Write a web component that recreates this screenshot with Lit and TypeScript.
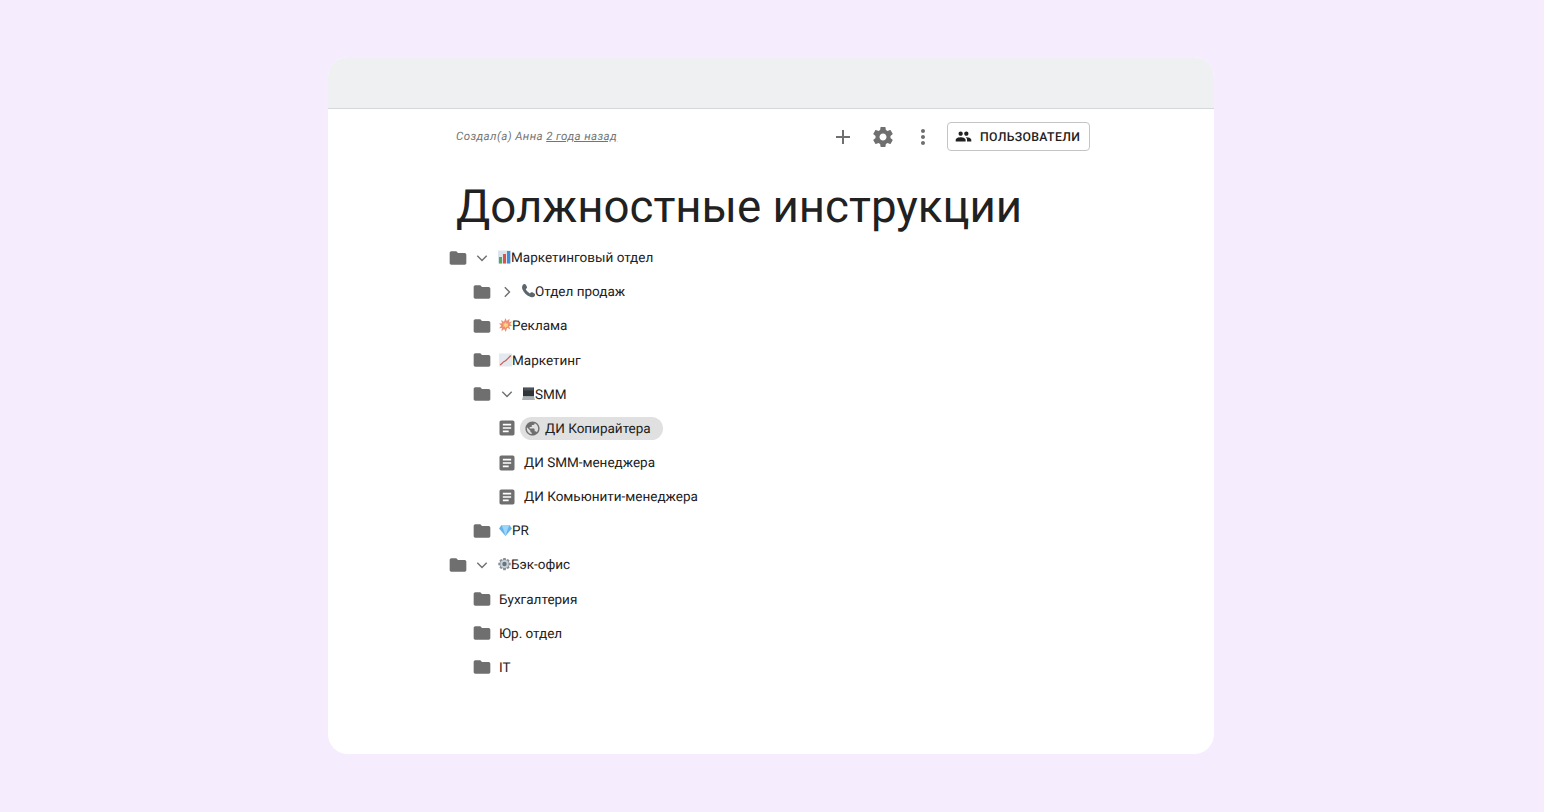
import { LitElement, html, css, svg } from "lit";
import { customElement } from "lit/decorators.js";

const folder = html`<svg class="ico" viewBox="0 0 24 24"><path d="M10 4H4c-1.100 0-1.990.900-1.990 2L2 18c0 1.100.900 2 2 2h16c1.100 0 2-.900 2-2V8c0-1.100-.900-2-2-2h-8l-2-2z"/></svg>`;
const doc = html`<svg class="ico" viewBox="0 0 24 24"><path d="M19 3H5c-1.100 0-2 .900-2 2v14c0 1.100.900 2 2 2h14c1.100 0 2-.900 2-2V5c0-1.100-.900-2-2-2zm-5 14H7v-2h7v2zm3-4H7v-2h10v2zm0-4H7V7h10v2z"/></svg>`;
const down = html`<svg class="chev" viewBox="0 0 16 16"><path d="M3.300 5.800l4.700 4.700 4.700-4.700" /></svg>`;
const right = html`<svg class="chev" viewBox="0 0 16 16"><path d="M5.800 3.300l4.700 4.700-4.700 4.700" /></svg>`;

const emoji: Record<string, unknown> = {
  chart: svg`<rect y="0.500" width="13" height="13" fill="#dbe4ec"/><rect x="1" y="7" width="3" height="6.500" fill="#55a84f"/><rect x="5" y="4" width="3" height="9.500" fill="#d9534a"/><rect x="9" y="1" width="3.200" height="12.500" fill="#3f8fd8"/>`,
  phone: svg`<path d="M.9.700c1-1 2.500-.8 3.100.2l1 2c.2.600 0 1.100-.5 1.500l-.8.700c.9 2 2.400 3.500 4.300 4.400l.8-.9c.4-.5 1-.6 1.600-.3l2 1.200c.9.600 1 1.900.2 2.700-1 1-2.500 1.200-3.900.7C4.600 11.500 1.900 8.800.4 5.200-.2 3.600 0 1.900.9.700z" fill="#5d666c"/>`,
  boom: svg`<path d="M6.500 0l1.200 3 2.900-2.200-.6 3.400 3.300-.7-2.300 2.600 2.300 1.600-3.200.6 1.400 3.100-3.300-1.700L6.700 14l-1.500-3L2.500 13.300l.4-3.400-2.900.3 2.300-2.500L0 5.600l3.100-.4-1.100-3.100 3 1.700z" fill="#ef8f72"/><path d="M6.600 4l1.100 1.700 1.800-.3-1 1.700 1 1.400-1.900.1-.9 1.400-.9-1.500-1.800.1 1-1.700-1-1.400 1.900 0z" fill="#f9d77e"/>`,
  trend: svg`<rect y="0.500" width="13" height="13" fill="#e3e9ee"/><path d="M1 12c1.800-.6 2.400-2.500 4-3.400 1.600-.7 2-.8 3-2.200L11.800 2.500" fill="none" stroke="#cf5a52" stroke-width="1.200"/>`,
  laptop: svg`<rect x="1" y="0.500" width="11" height="9" fill="#2e3438"/><rect x="1.500" y="1" width="10" height="2.500" fill="#4a5359"/><path d="M1 9.500h11l1 3.500H0z" fill="#aab1b6"/>`,
  gem: svg`<path d="M2.500 2h8L13 5.500l-6.500 7.500L0 5.500z" fill="#62b4ee"/><path d="M2.500 2h8L9 5.500H4zM4 5.500h5L6.500 13z" fill="#9ed5f8"/>`,
  gear: svg`<path d="M5.300 0h2.400l.4 2 1.800-1.100 1.700 1.700L10.500 4.400l2.200.4v2.400l-2.200.4 1.100 1.800-1.700 1.700-1.800-1.100-.4 2.200H5.300l-.4-2.200-1.800 1.100L1.400 9.400 2.500 7.600.3 7.200V4.800l2.200-.4L1.400 2.600l1.700-1.700 1.800 1.100z" transform="translate(0 1)" fill="#848f97"/><circle cx="6.500" cy="7" r="4.100" fill="#c9d1d7"/><circle cx="6.500" cy="7" r="2.200" fill="#66747e"/>`,
};
const em = (k: string) => html`<svg class="emo" viewBox="0 0 13 14">${emoji[k]}</svg>`;

type Row = { lvl: number; kind: "f" | "d"; chev?: "d" | "r"; em?: string; label: string; active?: boolean };
const rows: Row[] = [
  { lvl: 0, kind: "f", chev: "d", em: "chart", label: "Маркетинговый отдел" },
  { lvl: 1, kind: "f", chev: "r", em: "phone", label: "Отдел продаж" },
  { lvl: 1, kind: "f", em: "boom", label: "Реклама" },
  { lvl: 1, kind: "f", em: "trend", label: "Маркетинг" },
  { lvl: 1, kind: "f", chev: "d", em: "laptop", label: "SMM" },
  { lvl: 2, kind: "d", label: "ДИ Копирайтера", active: true },
  { lvl: 2, kind: "d", label: "ДИ SMM-менеджера" },
  { lvl: 2, kind: "d", label: "ДИ Комьюнити-менеджера" },
  { lvl: 1, kind: "f", em: "gem", label: "PR" },
  { lvl: 0, kind: "f", chev: "d", em: "gear", label: "Бэк-офис" },
  { lvl: 1, kind: "f", label: "Бухгалтерия" },
  { lvl: 1, kind: "f", label: "Юр. отдел" },
  { lvl: 1, kind: "f", label: "IT" },
];

@customElement("app-root")
export class AppRoot extends LitElement {
  static styles = css`
    :host {
      display: block;
      min-height: 812px;
      box-sizing: border-box;
      padding: 57px 330px 58px 328px;
      background: #f5ecfe;
      font-family: Roboto, "Liberation Sans", sans-serif;
      color: #212121;
      text-rendering: geometricPrecision;
    }
    .card {
      height: 697px;
      background: #fff;
      border-radius: 20px;
      overflow: hidden;
    }
    .top {
      height: 51px;
      background: #eff0f2;
      border-bottom: 1px solid #d5d7da;
    }
    .body {
      width: 634px;
      margin-left: 128px;
    }
    .meta {
      height: 55px;
      display: flex;
      align-items: center;
    }
    .created {
      flex: 1;
      margin-bottom: 1px;
      font-size: 11.5px;
      font-style: italic;
      letter-spacing: 0.4px;
      color: #757575;
    }
    .created u { text-underline-offset: 1px; }
    .act {
      width: 40px;
      height: 40px;
      display: flex;
      align-items: center;
      justify-content: center;
    }
    .act svg { fill: #6f6f6f; }
    .users {
      margin-left: 4px;
      box-sizing: border-box;
      width: 143px;
      height: 29px;
      margin-bottom: 1px;
      border: 1px solid #c4c4c4;
      border-radius: 4px;
      display: flex;
      align-items: center;
      gap: 8px;
      padding-left: 7px;
      font-size: 12.25px;
      font-weight: 500;
      letter-spacing: 0.35px;
      color: #212121;
      white-space: nowrap;
    }
    .users svg { width: 17px; height: 17px; fill: #212121; }
    .users span { margin-top: 1px; }
    h1 {
      margin: 0;
      height: 76.5px;
      line-height: 87px;
      font-size: 45.6px;
      font-weight: 400;
      color: #212121;
      white-space: nowrap;
    }
    .tree { margin-left: -8px; }
    .row {
      height: 34.17px;
      display: flex;
      align-items: center;
      font-size: 13.5px;
      color: #212121;
      white-space: nowrap;
    }
    .lbl { margin-top: 1px; }
    .ico { width: 20px; height: 20px; fill: #6f6f6f; flex: none; }
    .chevbox { width: 28px; margin-right: 2px; display: flex; justify-content: center; flex: none; }
    .sub .chevbox { margin-left: 1px; margin-right: 1px; }
    .spacer { width: 7px; flex: none; }
    .chev { width: 16px; height: 16px; fill: none; stroke: #6f6f6f; stroke-width: 1.4; }
    .emo { width: 13px; height: 14px; flex: none; margin-top: -1px; }
    .docl { margin-left: 7px; }
    .pill {
      margin-left: 3px;
      height: 23px;
      display: flex;
      align-items: center;
      background: #e0e0e0;
      border-radius: 12px;
      padding: 0 12px 0 4px;
      gap: 4px;
    }
    .pill svg { width: 17px; height: 17px; fill: #6f6f6f; }
  `;

  private renderRow(r: Row) {
    const indent = r.lvl === 2 ? 49 : r.lvl * 24;
    let content;
    if (r.kind === "d") {
      content = r.active
        ? html`<div class="pill"><svg viewBox="0 0 24 24"><path d="M12 2C6.480 2 2 6.480 2 12s4.480 10 10 10 10-4.480 10-10S17.520 2 12 2zm-1 17.930c-3.950-.490-7-3.850-7-7.930 0-.620.080-1.210.210-1.790L9 15v1c0 1.100.900 2 2 2v1.930zm6.900-2.540c-.260-.810-1-1.390-1.900-1.390h-1v-3c0-.550-.450-1-1-1H8v-2h2c.550 0 1-.450 1-1V7h2c1.100 0 2-.900 2-2v-.410c2.930 1.190 5 4.060 5 7.410 0 2.080-.800 3.970-2.100 5.390z"/></svg><span class="lbl">${r.label}</span></div>`
        : html`<span class="docl lbl">${r.label}</span>`;
    } else {
      content = html`${r.chev
        ? html`<span class="chevbox">${r.chev === "d" ? down : right}</span>`
        : html`<span class="spacer"></span>`}${r.em ? em(r.em) : ""}<span class="lbl">${r.label}</span>`;
    }
    return html`<div class="row ${r.lvl > 0 ? "sub" : ""}" style="padding-left:${indent}px">${r.kind === "f" ? folder : doc}${content}</div>`;
  }

  render() {
    return html`<div class="card">
      <div class="top"></div>
      <div class="body">
        <div class="meta">
          <div class="created">Создал(а) Анна <u>2 года назад</u></div>
          <div class="act"><svg width="24" height="24" viewBox="0 0 24 24"><path d="M19 13h-6v6h-2v-6H5v-2h6V5h2v6h6v2z" /></svg></div>
          <div class="act"><svg width="24" height="24" viewBox="0 0 24 24"><path d="M19.430 12.980c.040-.320.070-.640.070-.980s-.030-.660-.070-.980l2.110-1.650c.190-.150.240-.420.120-.640l-2-3.460c-.120-.220-.390-.300-.610-.220l-2.490 1c-.520-.400-1.080-.730-1.690-.980l-.380-2.650C14.460 2.180 14.250 2 14 2h-4c-.250 0-.460.180-.490.420l-.380 2.650c-.610.250-1.170.590-1.690.980l-2.490-1c-.230-.090-.490 0-.610.220l-2 3.460c-.130.220-.070.490.120.640l2.110 1.650c-.040.320-.070.650-.070.980s.030.660.070.980l-2.110 1.650c-.190.150-.240.420-.120.640l2 3.460c.120.220.390.300.610.220l2.490-1c.520.400 1.080.730 1.690.980l.380 2.650c.030.240.240.420.490.420h4c.250 0 .460-.180.490-.420l.380-2.650c.610-.250 1.170-.590 1.690-.980l2.490 1c.230.090.490 0 .610-.220l2-3.460c.120-.220.070-.490-.120-.640l-2.110-1.650zM12 15.500c-1.930 0-3.500-1.570-3.500-3.500s1.570-3.500 3.500-3.500 3.500 1.570 3.500 3.500-1.570 3.500-3.500 3.500z"/></svg></div>
          <div class="act"><svg width="24" height="24" viewBox="0 0 24 24"><path d="M12 8c1.100 0 2-.900 2-2s-.900-2-2-2-2 .900-2 2 .900 2 2 2zm0 2c-1.100 0-2 .900-2 2s.900 2 2 2 2-.900 2-2-.900-2-2-2zm0 6c-1.100 0-2 .900-2 2s.900 2 2 2 2-.900 2-2-.900-2-2-2z"/></svg></div>
          <div class="users"><svg viewBox="0 0 24 24"><path d="M16 11c1.660 0 2.990-1.340 2.990-3S17.660 5 16 5c-1.660 0-3 1.340-3 3s1.340 3 3 3zm-8 0c1.660 0 2.990-1.340 2.990-3S9.660 5 8 5C6.340 5 5 6.340 5 8s1.340 3 3 3zm0 2c-2.330 0-7 1.170-7 3.500V19h14v-2.500c0-2.330-4.670-3.500-7-3.500zm8 0c-.290 0-.620.020-.970.050 1.160.840 1.970 1.970 1.970 3.450V19h6v-2.500c0-2.330-4.670-3.500-7-3.500z"/></svg><span>ПОЛЬЗОВАТЕЛИ</span></div>
        </div>
        <h1>Должностные инструкции</h1>
        <div class="tree">${rows.map((r) => this.renderRow(r))}</div>
      </div>
    </div>`;
  }
}
